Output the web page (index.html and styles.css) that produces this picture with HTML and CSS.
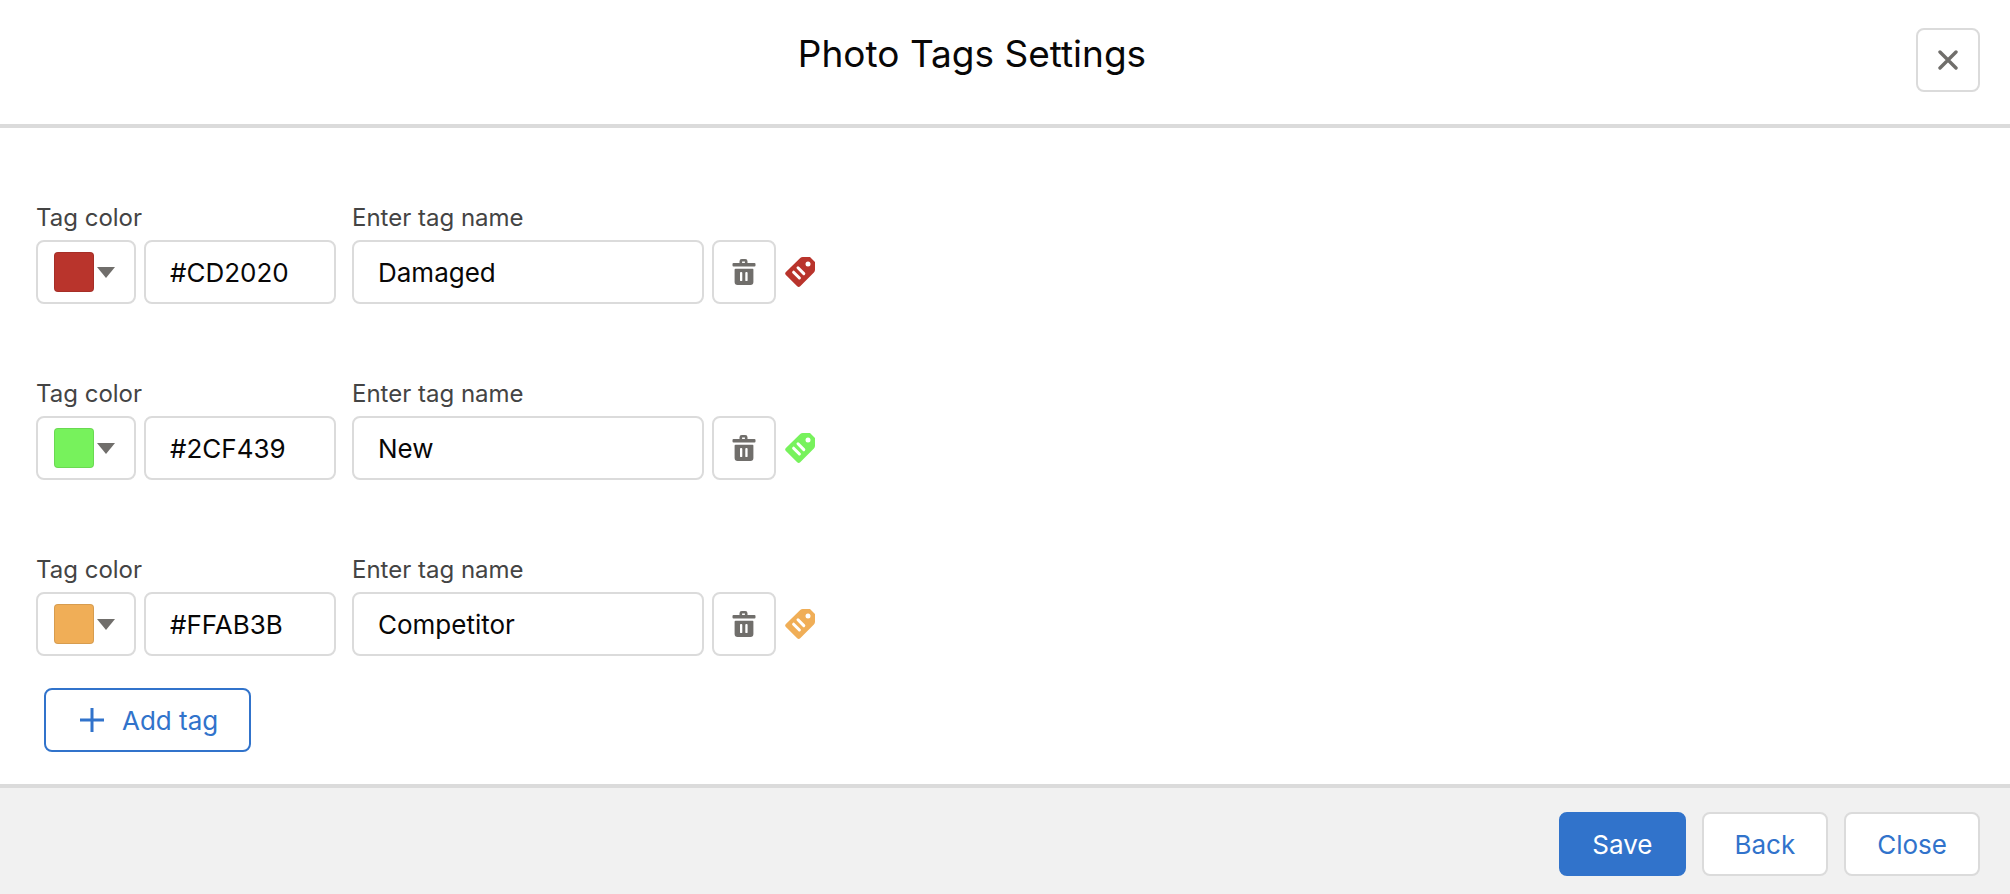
FILE: index.html
```html
<!DOCTYPE html>
<html lang="en">
<head>
<meta charset="utf-8">
<meta name="viewport" content="width=device-width, initial-scale=1">
<title>Photo Tags Settings</title>
<link rel="stylesheet" href="styles.css">
</head>
<body>
<svg class="sprite" aria-hidden="true">
  <symbol id="icon-trash" viewBox="0 0 24 28">
    <path fill="none" stroke="currentColor" stroke-width="2.6" d="M8.8 6V3.3Q8.8 2.3 9.8 2.3H13.2Q14.2 2.3 14.2 3.3V6"/>
    <rect x="0.500" y="5" width="23" height="3.4" rx="1" fill="currentColor"/>
    <path fill="currentColor" fill-rule="evenodd" d="M3.6 10.8H20.6Q21.4 10.8 21.4 11.6V24Q21.4 27 18.4 27H5.6Q2.6 27 2.6 24V11.6Q2.6 10.8 3.6 10.8ZM8.9 14Q8 14 8 14.9V22.2Q8 23.1 8.9 23.1H9.4Q10.3 23.1 10.3 22.2V14.9Q10.3 14 9.4 14ZM14.2 14Q13.3 14 13.3 14.9V22.2Q13.3 23.1 14.2 23.1H14.7Q15.6 23.1 15.6 22.2V14.9Q15.6 14 14.7 14Z"/>
  </symbol>
  <symbol id="icon-tag" viewBox="0 0 30 30">
    <path fill="currentColor" d="M15.2 1.1Q16.3 0 17.8 0H25L30 5V12.800Q30 14.300 28.900 15.400L15.200 29.200Q13.700 30.600 12.200 29.200L.900 17.900Q-.600 16.400 .900 15Z"/>
    <circle cx="23" cy="7" r="2.500" fill="#fff"/>
    <path fill="none" stroke="#fff" stroke-width="3" stroke-linecap="round" d="M8.600 15.200L14.400 21M13 10.800L18.800 16.600"/>
  </symbol>
</svg>

<header class="header">
  <h1 class="title">Photo Tags Settings</h1>
  <button class="btn btn-icon" type="button" aria-label="Close dialog">
    <svg class="close-icon" viewBox="0 0 20 20" aria-hidden="true"><path d="M2 2L18 18M18 2L2 18"/></svg>
  </button>
</header>

<main class="content">
  <div class="tag-row tag-red">
    <div class="field">
      <label class="label" for="color-1">Tag color</label>
      <div class="controls">
        <button class="btn swatch-btn" type="button" aria-label="Pick color"><span class="swatch"></span><span class="caret"></span></button>
        <input class="input input-color" id="color-1" type="text" value="#CD2020">
      </div>
    </div>
    <div class="field">
      <label class="label" for="name-1">Enter tag name</label>
      <div class="controls">
        <input class="input input-name" id="name-1" type="text" value="Damaged">
        <button class="btn btn-icon" type="button" aria-label="Delete tag"><svg class="trash-icon" aria-hidden="true"><use href="#icon-trash"/></svg></button>
        <svg class="tag-icon" aria-hidden="true"><use href="#icon-tag"/></svg>
      </div>
    </div>
  </div>

  <div class="tag-row tag-green">
    <div class="field">
      <label class="label" for="color-2">Tag color</label>
      <div class="controls">
        <button class="btn swatch-btn" type="button" aria-label="Pick color"><span class="swatch"></span><span class="caret"></span></button>
        <input class="input input-color" id="color-2" type="text" value="#2CF439">
      </div>
    </div>
    <div class="field">
      <label class="label" for="name-2">Enter tag name</label>
      <div class="controls">
        <input class="input input-name" id="name-2" type="text" value="New">
        <button class="btn btn-icon" type="button" aria-label="Delete tag"><svg class="trash-icon" aria-hidden="true"><use href="#icon-trash"/></svg></button>
        <svg class="tag-icon" aria-hidden="true"><use href="#icon-tag"/></svg>
      </div>
    </div>
  </div>

  <div class="tag-row tag-orange">
    <div class="field">
      <label class="label" for="color-3">Tag color</label>
      <div class="controls">
        <button class="btn swatch-btn" type="button" aria-label="Pick color"><span class="swatch"></span><span class="caret"></span></button>
        <input class="input input-color" id="color-3" type="text" value="#FFAB3B">
      </div>
    </div>
    <div class="field">
      <label class="label" for="name-3">Enter tag name</label>
      <div class="controls">
        <input class="input input-name" id="name-3" type="text" value="Competitor">
        <button class="btn btn-icon" type="button" aria-label="Delete tag"><svg class="trash-icon" aria-hidden="true"><use href="#icon-trash"/></svg></button>
        <svg class="tag-icon" aria-hidden="true"><use href="#icon-tag"/></svg>
      </div>
    </div>
  </div>

  <button class="btn btn-add" type="button">
    <svg class="plus-icon" viewBox="0 0 24 24" aria-hidden="true"><path d="M12 0V24M0 12H24"/></svg>
    Add tag
  </button>
</main>

<footer class="footer">
  <button class="btn btn-primary" type="button">Save</button>
  <button class="btn" type="button">Back</button>
  <button class="btn" type="button">Close</button>
</footer>
</body>
</html>
```

FILE: styles.css
```css
*, *::before, *::after {
  box-sizing: border-box;
}

body {
  margin: 0;
  min-height: 100vh;
  display: flex;
  flex-direction: column;
  background: #fff;
  color: #080707;
  font-family: Inter, "Liberation Sans", sans-serif;
  font-size: 26px;
}

.sprite {
  display: none;
}

.header {
  display: flex;
  align-items: flex-start;
  padding: 28px 30px 32px 28px;
  border-bottom: 4px solid #dbdbdb;
}

.title {
  flex: 1;
  margin: 0;
  font-size: 37px;
  font-weight: 400;
  line-height: 52px;
  text-align: center;
}

.btn {
  height: 64px;
  padding: 0 31px;
  display: flex;
  align-items: center;
  justify-content: center;
  border: 2px solid #dbdbdb;
  border-radius: 8px;
  background: #fff;
  color: #3173cb;
  font: inherit;
  white-space: nowrap;
}

.btn-icon {
  width: 64px;
  padding: 0;
  color: #706e6b;
}

.close-icon {
  width: 20px;
  height: 20px;
  fill: none;
  stroke: currentColor;
  stroke-width: 3.4;
  stroke-linecap: round;
}

.content {
  flex: 1;
  padding: 0 36px 32px;
}

.tag-row {
  display: flex;
  gap: 16px;
  padding-top: 74px;
}

.tag-red { color: #b9342c; }
.tag-green { color: #77f25c; }
.tag-orange { color: #f0ae57; }

.label {
  display: block;
  margin-bottom: 6px;
  color: #444;
  font-size: 24px;
  line-height: 32px;
}

.controls {
  display: flex;
  align-items: center;
  gap: 8px;
}

.swatch-btn {
  width: 100px;
  padding: 0 0 0 16px;
  justify-content: flex-start;
  gap: 3px;
  color: inherit;
}

.swatch {
  width: 40px;
  height: 40px;
  border: 1px solid rgba(0, 0, 0, 0.1);
  border-radius: 4px;
  background: currentColor;
}

.caret {
  border: 9px solid transparent;
  border-top: 11px solid #706e6b;
  border-bottom: 0;
}

.input {
  height: 64px;
  padding: 0 24px;
  border: 2px solid #dbdbdb;
  border-radius: 8px;
  background: #fff;
  color: #080707;
  font: inherit;
}

.input-color {
  width: 192px;
}

.input-name {
  width: 352px;
}

.trash-icon {
  width: 24px;
  height: 28px;
}

.tag-icon {
  width: 32px;
  height: 30px;
}

.btn-add {
  margin: 32px 0 0 8px;
  padding: 0 31px 0 34px;
  gap: 18px;
  border-color: #3173cb;
}

.plus-icon {
  width: 24px;
  height: 24px;
  fill: none;
  stroke: currentColor;
  stroke-width: 3;
}

.footer {
  display: flex;
  justify-content: flex-end;
  gap: 16px;
  padding: 24px 30px 18px;
  border-top: 4px solid #dbdbdb;
  background: #f1f1f1;
}

.btn-primary {
  border-color: #3173cb;
  background: #3173cb;
  color: #fff;
}
```
